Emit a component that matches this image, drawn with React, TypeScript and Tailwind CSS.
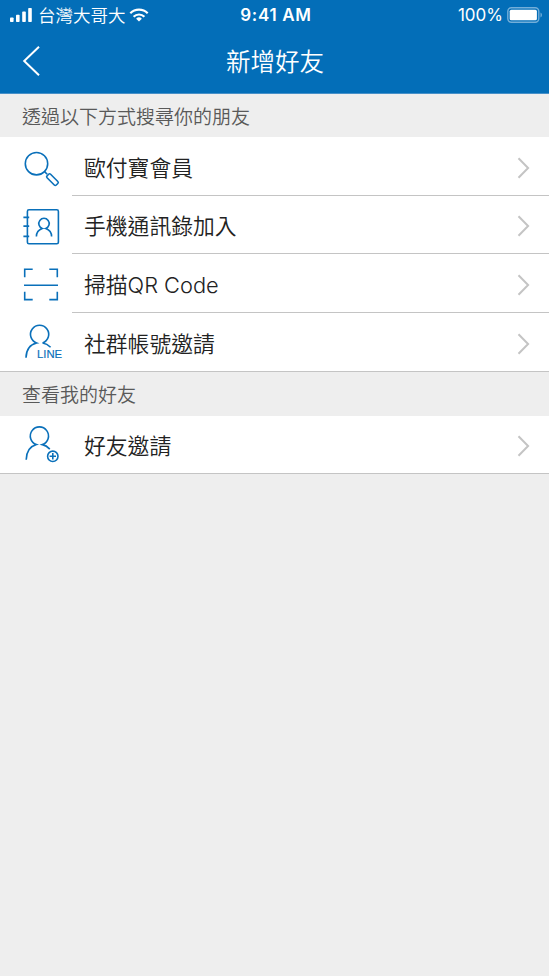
import React from 'react';

const iconProps = {
  width: 72,
  height: 58,
  viewBox: '0 0 72 58',
  fill: 'none',
  stroke: '#0a70ba',
  strokeWidth: 1.6,
};

const SearchIcon = () => (
  <svg {...iconProps}>
    <circle cx="36.5" cy="26.7" r="11.2" />
    <path d="M44.6 34.6l2.6 2.6" />
    <rect x="46" y="40" width="13" height="5" rx="1.4" transform="rotate(45 52.3 42.5)" />
  </svg>
);

const ContactsIcon = () => (
  <svg {...iconProps}>
    <rect x="27.4" y="13.8" width="31" height="34" rx="1.6" />
    <path d="M23.4 21.4h5.8M23.4 30.1h5.8M23.4 40.4h5.8" />
    <path d="M36.4 40.4c0-4 2-6.6 5.8-8a5.2 5.2 0 1 1 3.6 0c3.8 1.4 5.8 4 5.8 8" />
  </svg>
);

const ScanIcon = () => (
  <svg {...iconProps}>
    <path d="M32.7 15.2h-8v8M49.3 15.2h8v8M24.7 37.8v7.8h8M57.3 37.8v7.8h-8M24 31.2h34" />
  </svg>
);

const LineIcon = () => (
  <svg {...iconProps}>
    <path d="M26 44.8c.2-7.7 3.6-13.2 10.6-14.8a9.1 9.1 0 1 1 6 0c3.2.5 5.6 1.900 8 4.300" />
    <text
      x="37"
      y="45.3"
      className="font-['Liberation_Sans'] text-[11.3px] font-normal"
      fill="#0a70ba"
      stroke="#0a70ba"
      strokeWidth="0.15"
    >
      LINE
    </text>
  </svg>
);

const InviteIcon = () => (
  <svg {...iconProps}>
    <path d="M26.2 43.8c.2-7.7 3.4-13.3 10.200-15.200a9.1 9.1 0 1 1 6 0c3 .6 5.100 2 7.400 4.500" />
    <circle cx="52.8" cy="40.3" r="5.2" />
    <path d="M49.6 40.3h6.4M52.8 37.1v6.4" />
  </svg>
);

const searchOptions = [
  { label: '歐付寶會員', icon: SearchIcon, height: 'h-[59px]' },
  { label: '手機通訊錄加入', icon: ContactsIcon, height: 'h-[58px]' },
  { label: '掃描QR Code', icon: ScanIcon, height: 'h-[59px]' },
  { label: '社群帳號邀請', icon: LineIcon, height: 'h-[59px]' },
];

const friendOptions = [{ label: '好友邀請', icon: InviteIcon, height: 'h-[58px]' }];

const StatusBar = () => (
  <div className="grid h-[30px] grid-cols-3 items-center pl-[10px] pr-[7px] text-[17.5px]">
    <div className="flex items-center">
      <svg width="23" height="14" viewBox="0 0 23 14" fill="#fff">
        <rect x="0" y="9.5" width="3.6" height="4.5" rx="0.8" />
        <rect x="6" y="6.7" width="3.6" height="7.3" rx="0.8" />
        <rect x="12.2" y="3.6" width="3.6" height="10.4" rx="0.8" />
        <rect x="18.2" y="0" width="3.6" height="14" rx="0.8" />
      </svg>
      <span className="ml-[5px] pt-[2px] leading-none">台灣大哥大</span>
      <svg className="ml-[3px]" width="20" height="14" viewBox="0 0 20 14" fill="none" stroke="#fff" strokeWidth="2.2">
        <path d="M1.3 5.2a12.5 12.5 0 0 1 17.4 0M4.6 8.7a7.7 7.7 0 0 1 10.8 0" />
        <path d="M10 13.6l-2.9-2.9a4.2 4.2 0 0 1 5.8 0z" fill="#fff" stroke="none" />
      </svg>
    </div>
    <div className="text-center font-['Inter'] text-[17px] font-semibold leading-none tracking-[0.7px]">9:41 AM</div>
    <div className="flex items-center justify-end">
      <span className="font-['Inter'] text-[17px] font-normal leading-none">100%</span>
      <svg className="ml-[4px]" width="35" height="16" viewBox="0 0 35 16" fill="#fff">
        <rect x="0.8" y="0.8" width="31" height="14.4" rx="3.6" fill="none" stroke="#73aed9" strokeWidth="1.4" />
        <rect x="2.7" y="2.7" width="27.2" height="10.6" rx="1.6" />
        <path d="M33.5 5.5c1.9.8 1.9 4.2 0 5z" fill="#73aed9" />
      </svg>
    </div>
  </div>
);

const OptionRow = ({ label, icon: Icon, height, last }) => (
  <div className={`flex bg-white ${height} ${last ? 'border-b border-[#c4c4c4]' : ''}`}>
    <Icon />
    <div className={`flex flex-1 items-center justify-between pl-[12px] pr-[19px] ${last ? '' : 'border-b border-[#c4c4c4]'}`}>
      <span className="pt-[5px] text-[21.8px] leading-none text-[#222]">{label}</span>
      <svg className="mt-[3px]" width="13" height="22" viewBox="0 0 13 22" fill="none" stroke="#c4c4c4" strokeWidth="2">
        <path d="M1.5 1.3l9.6 9.7-9.6 9.7" />
      </svg>
    </div>
  </div>
);

const OptionList = ({ options }) => (
  <div>
    {options.map((option, idx) => (
      <OptionRow key={option.label} {...option} last={idx === options.length - 1} />
    ))}
  </div>
);

const App = () => {
  return (
    <div className="h-[976px] w-[549px] overflow-hidden bg-[#eee] font-['Inter','Noto_Sans_CJK_TC',sans-serif] font-[350]">
      {/* Header */}
      <header className="h-[94px] border-b border-[#4790c8] bg-[#036eb8] text-white">
        <StatusBar />
        <div className="grid h-[62px] grid-cols-[60px_1fr_60px] items-center">
          <svg className="ml-[22px]" width="20" height="32" viewBox="0 0 20 32" fill="none" stroke="#fff" strokeWidth="2">
            <path d="M17 1.8L2.2 16 17 30.2" />
          </svg>
          <h1 className="pt-[3px] pl-px text-center text-[24.5px] leading-none">新增好友</h1>
        </div>
      </header>

      {/* Search */}
      <h2 className="flex h-[43px] items-center pl-[22px] pt-[3px] text-[19px] leading-none text-[#595959]">
        透過以下方式搜尋你的朋友
      </h2>
      <OptionList options={searchOptions} />

      {/* Friends */}
      <h2 className="flex h-[44px] items-center pl-[22px] pt-[3px] text-[19px] leading-none text-[#595959]">
        查看我的好友
      </h2>
      <OptionList options={friendOptions} />
    </div>
  );
};

export default App;
